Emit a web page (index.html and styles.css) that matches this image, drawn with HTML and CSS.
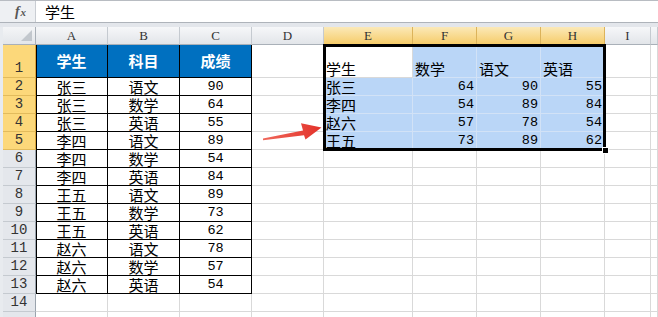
FILE: index.html
```html
<!DOCTYPE html>
<html lang="zh-CN">
<head>
    <meta charset="UTF-8">
    <title>成绩表</title>
    <link rel="stylesheet" href="styles.css">
</head>
<body>
    <div class="formula">
        <div class="fx"><i>f</i><i class="x">x</i></div>
        <div class="input">学生</div>
    </div>

    <div class="sheet">
        <div class="grid">
            <div class="corner"><span class="tri"></span></div>
            <div class="ch">A</div><div class="ch">B</div><div class="ch">C</div><div class="ch">D</div>
            <div class="ch on">E</div><div class="ch on">F</div><div class="ch on">G</div><div class="ch on">H</div>
            <div class="ch">I</div><div class="ch"></div>

            <div class="rh on">1</div>
            <div class="c t hd first">学生</div><div class="c t hd">科目</div><div class="c t hd">成绩</div><div class="c"></div>
            <div class="c l">学生</div><div class="c s l">数学</div><div class="c s l">语文</div><div class="c s l">英语</div>
            <div class="c"></div><div class="c"></div>

            <div class="rh on">2</div>
            <div class="c t first">张三</div><div class="c t">语文</div><div class="c t n">90</div><div class="c"></div>
            <div class="c s l">张三</div><div class="c s n r">64</div><div class="c s n r">90</div><div class="c s n r">55</div>
            <div class="c"></div><div class="c"></div>

            <div class="rh on">3</div>
            <div class="c t first">张三</div><div class="c t">数学</div><div class="c t n">64</div><div class="c"></div>
            <div class="c s l">李四</div><div class="c s n r">54</div><div class="c s n r">89</div><div class="c s n r">84</div>
            <div class="c"></div><div class="c"></div>

            <div class="rh on">4</div>
            <div class="c t first">张三</div><div class="c t">英语</div><div class="c t n">55</div><div class="c"></div>
            <div class="c s l">赵六</div><div class="c s n r">57</div><div class="c s n r">78</div><div class="c s n r">54</div>
            <div class="c"></div><div class="c"></div>

            <div class="rh on">5</div>
            <div class="c t first">李四</div><div class="c t">语文</div><div class="c t n">89</div><div class="c"></div>
            <div class="c s l">王五</div><div class="c s n r">73</div><div class="c s n r">89</div><div class="c s n r">62</div>
            <div class="c"></div><div class="c"></div>

            <div class="rh">6</div>
            <div class="c t first">李四</div><div class="c t">数学</div><div class="c t n">54</div><div class="c"></div>
            <div class="c"></div><div class="c"></div><div class="c"></div><div class="c"></div><div class="c"></div><div class="c"></div>

            <div class="rh">7</div>
            <div class="c t first">李四</div><div class="c t">英语</div><div class="c t n">84</div><div class="c"></div>
            <div class="c"></div><div class="c"></div><div class="c"></div><div class="c"></div><div class="c"></div><div class="c"></div>

            <div class="rh">8</div>
            <div class="c t first">王五</div><div class="c t">语文</div><div class="c t n">89</div><div class="c"></div>
            <div class="c"></div><div class="c"></div><div class="c"></div><div class="c"></div><div class="c"></div><div class="c"></div>

            <div class="rh">9</div>
            <div class="c t first">王五</div><div class="c t">数学</div><div class="c t n">73</div><div class="c"></div>
            <div class="c"></div><div class="c"></div><div class="c"></div><div class="c"></div><div class="c"></div><div class="c"></div>

            <div class="rh">10</div>
            <div class="c t first">王五</div><div class="c t">英语</div><div class="c t n">62</div><div class="c"></div>
            <div class="c"></div><div class="c"></div><div class="c"></div><div class="c"></div><div class="c"></div><div class="c"></div>

            <div class="rh">11</div>
            <div class="c t first">赵六</div><div class="c t">语文</div><div class="c t n">78</div><div class="c"></div>
            <div class="c"></div><div class="c"></div><div class="c"></div><div class="c"></div><div class="c"></div><div class="c"></div>

            <div class="rh">12</div>
            <div class="c t first">赵六</div><div class="c t">数学</div><div class="c t n">57</div><div class="c"></div>
            <div class="c"></div><div class="c"></div><div class="c"></div><div class="c"></div><div class="c"></div><div class="c"></div>

            <div class="rh">13</div>
            <div class="c t first">赵六</div><div class="c t">英语</div><div class="c t n">54</div><div class="c"></div>
            <div class="c"></div><div class="c"></div><div class="c"></div><div class="c"></div><div class="c"></div><div class="c"></div>

            <div class="rh">14</div>
            <div class="c"></div><div class="c"></div><div class="c"></div><div class="c"></div>
            <div class="c"></div><div class="c"></div><div class="c"></div><div class="c"></div><div class="c"></div><div class="c"></div>

            <div class="rh"></div>
            <div class="c"></div><div class="c"></div><div class="c"></div><div class="c"></div>
            <div class="c"></div><div class="c"></div><div class="c"></div><div class="c"></div><div class="c"></div><div class="c"></div>
        </div>

        <!-- selection frame over E1:H5 -->
        <div class="selection"><span class="handle"></span></div>

        <svg class="arrow" width="62" height="26" viewBox="0 0 62 26">
            <defs>
                <linearGradient id="red" x1="0" y1="0" x2="1" y2="0">
                    <stop offset="0" stop-color="#f0675a"/>
                    <stop offset="1" stop-color="#e3322a"/>
                </linearGradient>
            </defs>
            <polygon points="1,21.6 41,13.6 39,6.2 59.5,10.6 43.5,22.4 42,18.2 1,23.2" fill="url(#red)"/>
        </svg>
    </div>
</body>
</html>
```

FILE: styles.css
```css
* {
    box-sizing: border-box;
}
body {
    margin: 0;
    background: #e3e6eb;
    font-family: "Noto Sans CJK SC", sans-serif;
    overflow: hidden;
}

/* formula bar */
.formula {
    display: flex;
    height: 23px;
    border-top: 1px solid #b8bcc2;
    border-bottom: 1px solid #aeb3ba;
    background: #eef0f3;
}
.fx {
    width: 36px;
    display: flex;
    align-items: center;
    justify-content: center;
    padding-left: 6px;
    font-family: "Liberation Serif", serif;
    font-size: 14px;
    font-weight: bold;
    color: #555;
    border-right: 1px solid #c9cdd3;
}
.fx .x {
    font-size: 11px;
    margin-left: 1px;
}
.input {
    flex: 1;
    background: #fff;
    padding-left: 9px;
    font-size: 15px;
    line-height: 21px;
    color: #000;
}

.sheet {
    position: relative;
    margin-top: 4px;
    padding-left: 3px;
    background: #e8ebef;
}
.grid {
    display: grid;
    grid-template-columns: 33px 72px 72px 72px 72px 89px 64px 64px 64px 46px 1fr;
    grid-template-rows: 18px 33px repeat(14, 18px);
    background: #fff;
}

/* headers */
.corner {
    position: relative;
    background: linear-gradient(#f4f5f7, #e3e6ea);
    border-right: 1px solid #a9b0b8;
    border-bottom: 1px solid #a9b0b8;
}
.tri {
    position: absolute;
    right: 3px;
    bottom: 3px;
    border-left: 11px solid transparent;
    border-bottom: 11px solid #c2c7cd;
}
.ch {
    background: linear-gradient(#f6f7f9, #e2e5e9);
    border-right: 1px solid #c5cad0;
    border-bottom: 1px solid #a9b0b8;
    font-family: "Liberation Serif", serif;
    font-size: 13px;
    line-height: 17px;
    text-align: center;
    color: #333;
}
.ch.on {
    background: linear-gradient(#fbe9b8, #f6cc6a);
    border-right-color: #dcb35a;
    border-bottom-color: #e0a93a;
}
.rh {
    display: flex;
    align-items: flex-end;
    justify-content: center;
    background: #e4e7ec;
    border-right: 1px solid #9aa3ad;
    border-bottom: 1px solid #c5cad0;
    font-family: "Liberation Mono", monospace;
    font-size: 14px;
    line-height: 17px;
    color: #333;
}
.rh.on {
    background: #fcd87a;
    border-bottom-color: #e2bb5c;
    border-right-color: #d9a53c;
}

/* cells */
.c {
    display: flex;
    align-items: flex-end;
    justify-content: center;
    padding: 0 2px;
    border-right: 1px solid #d9d9d9;
    border-bottom: 1px solid #d9d9d9;
    font-size: 15px;
    line-height: 17px;
    color: #000;
    white-space: nowrap;
}
.c.t {
    border-right-color: #000;
    border-bottom-color: #000;
}
.c.first {
    box-shadow: inset 1px 0 #000;
}
.c.hd {
    align-items: center;
    background: #0070c0;
    color: #fff;
    font-weight: bold;
    padding-bottom: 2px;
}
.c.n {
    font-family: "Liberation Mono", monospace;
    font-size: 13.5px;
}
.c.l {
    justify-content: flex-start;
}
.c.r {
    justify-content: flex-end;
}
.c.s {
    background: #bad6f7;
    border-right-color: #d2e2f6;
    border-bottom-color: #d2e2f6;
}

.selection {
    position: absolute;
    left: 323px;
    top: 17px;
    width: 283px;
    height: 107px;
    border: 3px solid #000;
}
.handle {
    position: absolute;
    right: -6px;
    bottom: -6px;
    width: 7px;
    height: 7px;
    background: #000;
    border: 1px solid #fff;
}
.arrow {
    position: absolute;
    left: 262px;
    top: 90px;
}
```
